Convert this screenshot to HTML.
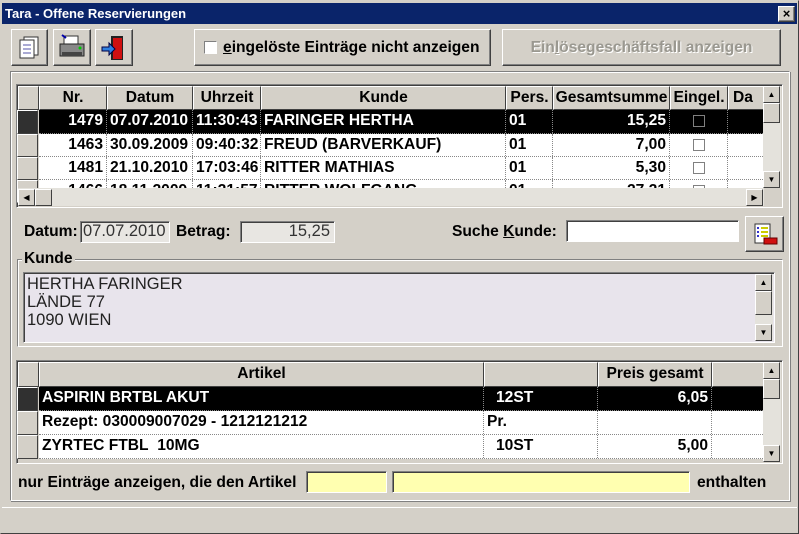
<!DOCTYPE html>
<html><head><meta charset="utf-8"><style>
*{margin:0;padding:0;box-sizing:border-box}
body{width:799px;height:534px;background:#d4d0c8;font-family:"Liberation Sans",Arial,sans-serif;font-size:15.6px;color:#000;position:relative;overflow:hidden}
.a{position:absolute}
.raised{border:1px solid;border-color:#fff #404040 #404040 #fff;box-shadow:inset -1px -1px 0 #808080}
.sunk{border:1px solid;border-color:#808080 #fff #fff #808080;box-shadow:inset 1px 1px 0 #404040}
.b{font-weight:bold}
.cell{position:absolute;top:0;height:100%;border-right:1px dotted #888;white-space:nowrap;overflow:hidden;line-height:22px;padding:0 3px;font-weight:bold;font-size:15.6px}
.row{position:absolute;left:0;background:#fff;border-bottom:1px dotted #888}
.sel{background:#000;color:#fff}
.hdr{position:absolute;top:0;height:100%;border:1px solid;border-color:#fff #404040 #404040 #fff;background:#d4d0c8;text-align:center;line-height:22px;font-weight:bold;font-size:15.6px;white-space:nowrap;overflow:hidden}
.rh{position:absolute;left:0;width:21px;border:1px solid;border-color:#fff #404040 #404040 #fff;background:#d4d0c8}
.sb{background:#e4e2dc}
.arr{position:absolute;width:17px;height:17px;background:#d4d0c8;border:1px solid;border-color:#fff #404040 #404040 #fff;font-size:8px;text-align:center;line-height:15px}
.r{text-align:right}
.cb{display:inline-block;width:12px;height:12px;border:1px solid #808080;background:#fff;vertical-align:middle}
</style></head><body>
<div class="a" style="left:0;top:0;width:799px;height:534px;border:1px solid;border-color:#d4d0c8 #404040 #404040 #d4d0c8"></div>
<div class="a" style="left:2px;top:3px;width:795px;height:21px;background:#0a246a;color:#fff;font-weight:bold;font-size:13px;line-height:21px;padding-left:3px">Tara - Offene Reservierungen</div>
<div class="a raised" style="left:778px;top:6px;width:17px;height:16px;background:#d4d0c8;text-align:center;font-weight:bold;line-height:13px;font-size:13px">×</div>
<div class="a raised" style="left:11px;top:29px;width:37px;height:37px;background:#d4d0c8">
<svg width="35" height="35"><rect x="12" y="7" width="14" height="18" fill="#fff" stroke="#333"/><rect x="8" y="10" width="14" height="18" fill="#fff" stroke="#333"/><line x1="11" y1="15" x2="19" y2="15" stroke="#55a"/><line x1="11" y1="19" x2="19" y2="19" stroke="#55a"/><line x1="11" y1="23" x2="19" y2="23" stroke="#55a"/></svg></div>
<div class="a raised" style="left:53px;top:29px;width:38px;height:37px;background:#d4d0c8">
<svg width="36" height="35"><rect x="10" y="6" width="14" height="10" fill="#fff" stroke="#333"/><rect x="6" y="14" width="24" height="12" fill="#888" stroke="#222"/><rect x="8" y="22" width="20" height="4" fill="#444"/><circle cx="26" cy="18" r="1.5" fill="#0c0"/><path d="M8 5 l4 3" stroke="#00a" stroke-width="2"/></svg></div>
<div class="a raised" style="left:95px;top:29px;width:38px;height:37px;background:#d4d0c8">
<svg width="36" height="35"><rect x="15" y="6" width="12" height="24" fill="#222"/><rect x="17" y="8" width="9" height="21" fill="#d01010"/><path d="M6 17 h7 v-4 l6 6 -6 6 v-4 h-7z" fill="#3080e0" stroke="#004"/></svg></div>
<div class="a raised" style="left:194px;top:29px;width:297px;height:37px;background:#d4d0c8;line-height:35px;padding-left:9px;font-weight:bold"><span class="cb" style="width:13px;height:13px;border-color:#808080 #fff #fff #808080;margin-right:6px"></span><u>e</u>ingelöste Einträge nicht anzeigen</div>
<div class="a raised" style="left:502px;top:29px;width:279px;height:37px;background:#d4d0c8;line-height:35px;text-align:center;font-weight:bold;color:#9a9890;text-shadow:1px 1px 0 #fff">Ein<u>l</u>ösegeschäftsfall anzeigen</div>
<div class="a" style="left:10px;top:71px;width:780px;height:430px;border:1px solid;border-color:#808080 #fff #fff #808080;box-shadow:inset 1px 1px 0 #fff, 1px 1px 0 #808080"></div>
<div class="a sunk" style="left:16px;top:84px;width:767px;height:124px;background:#d4d0c8;overflow:hidden">
 <div class="a" style="left:1px;top:1px;width:746px;height:24px">
  <div class="hdr" style="left:0;width:21px"></div>
  <div class="hdr" style="left:21px;width:68px">Nr.</div>
  <div class="hdr" style="left:89px;width:86px">Datum</div>
  <div class="hdr" style="left:175px;width:68px">Uhrzeit</div>
  <div class="hdr" style="left:243px;width:245px">Kunde</div>
  <div class="hdr" style="left:488px;width:47px">Pers.</div>
  <div class="hdr" style="left:535px;width:117px">Gesamtsumme</div>
  <div class="hdr" style="left:652px;width:58px">Eingel.</div>
  <div class="hdr" style="left:710px;width:40px;text-align:left;padding-left:4px">Da</div>
 </div>
 <div class="rh" style="top:25px;height:24px;background:#303030"></div>
 <div class="rh" style="top:49px;height:23px"></div>
 <div class="rh" style="top:72px;height:23px"></div>
 <div class="rh" style="top:95px;height:23px"></div>
 <div class="row sel" style="left:22px;top:25px;width:724px;height:24px">
  <div class="cell r" style="left:0;width:68px">1479</div><div class="cell" style="left:68px;width:86px">07.07.2010</div><div class="cell" style="left:154px;width:68px">11:30:43</div><div class="cell" style="left:222px;width:245px">FARINGER HERTHA</div><div class="cell" style="left:467px;width:47px">01</div><div class="cell r" style="left:514px;width:117px">15,25</div><div class="cell" style="left:631px;width:58px;text-align:center"><span class="cb" style="background:#000"></span></div></div>
 <div class="row" style="left:22px;top:49px;width:724px;height:23px">
  <div class="cell r" style="left:0;width:68px">1463</div><div class="cell" style="left:68px;width:86px">30.09.2009</div><div class="cell" style="left:154px;width:68px">09:40:32</div><div class="cell" style="left:222px;width:245px">FREUD (BARVERKAUF)</div><div class="cell" style="left:467px;width:47px">01</div><div class="cell r" style="left:514px;width:117px">7,00</div><div class="cell" style="left:631px;width:58px;text-align:center"><span class="cb"></span></div></div>
 <div class="row" style="left:22px;top:72px;width:724px;height:23px">
  <div class="cell r" style="left:0;width:68px">1481</div><div class="cell" style="left:68px;width:86px">21.10.2010</div><div class="cell" style="left:154px;width:68px">17:03:46</div><div class="cell" style="left:222px;width:245px">RITTER MATHIAS</div><div class="cell" style="left:467px;width:47px">01</div><div class="cell r" style="left:514px;width:117px">5,30</div><div class="cell" style="left:631px;width:58px;text-align:center"><span class="cb"></span></div></div>
 <div class="row" style="left:22px;top:95px;width:724px;height:23px">
  <div class="cell r" style="left:0;width:68px">1466</div><div class="cell" style="left:68px;width:86px">18.11.2009</div><div class="cell" style="left:154px;width:68px">11:21:57</div><div class="cell" style="left:222px;width:245px">RITTER WOLFGANG</div><div class="cell" style="left:467px;width:47px">01</div><div class="cell r" style="left:514px;width:117px">27,21</div><div class="cell" style="left:631px;width:58px;text-align:center"><span class="cb"></span></div></div>
 <div class="a sb" style="left:746px;top:1px;width:18px;height:102px"></div>
 <div class="arr" style="left:746px;top:1px">▲</div>
 <div class="arr" style="left:746px;top:18px;height:20px"></div>
 <div class="arr" style="left:746px;top:86px">▼</div>
 <div class="a sb" style="left:1px;top:103px;width:746px;height:18px"></div>
 <div class="arr" style="left:1px;top:104px">◀</div>
 <div class="arr" style="left:18px;top:104px"></div>
 <div class="arr" style="left:729px;top:104px">▶</div>
</div>
<div class="a b" style="left:24px;top:223px">Datum:</div>
<div class="a sunk" style="left:80px;top:221px;width:90px;height:22px;background:#e8e6e2;line-height:19px;padding-left:2px;font-size:16.5px;color:#333">07.07.2010</div>
<div class="a b" style="left:176px;top:223px">Betrag:</div>
<div class="a sunk" style="left:240px;top:221px;width:95px;height:22px;background:#e8e6e2;line-height:19px;padding-right:4px;text-align:right;font-size:16.5px;color:#333">15,25</div>
<div class="a b" style="left:452px;top:223px">Suche <u>K</u>unde:</div>
<div class="a sunk" style="left:566px;top:220px;width:173px;height:22px;background:#fff"></div>
<div class="a raised" style="left:745px;top:216px;width:39px;height:36px;background:#d4d0c8">
<svg width="37" height="34"><rect x="9" y="7" width="15" height="19" fill="#fff" stroke="#333"/><g fill="#33c"><rect x="11" y="10" width="2" height="2"/><rect x="11" y="14" width="2" height="2"/><rect x="11" y="18" width="2" height="2"/></g><g stroke="#cc0" stroke-width="2"><line x1="15" y1="11" x2="22" y2="11"/><line x1="15" y1="15" x2="22" y2="15"/><line x1="15" y1="19" x2="22" y2="19"/></g><rect x="18" y="21" width="13" height="6" fill="#d01010" stroke="#600"/></svg></div>
<div class="a" style="left:17px;top:259px;width:766px;height:88px;border:1px solid;border-color:#808080 #fff #fff #808080;box-shadow:inset 1px 1px 0 #fff"></div>
<div class="a b" style="left:22px;top:250px;background:#d4d0c8;padding:0 2px">Kunde</div>
<div class="a sunk" style="left:23px;top:272px;width:752px;height:71px;background:#e8e4ec;padding:2px 3px;font-size:16.5px;line-height:18px;color:#222">HERTHA FARINGER<br>LÄNDE 77<br>1090 WIEN</div>
<div class="a sb" style="left:755px;top:274px;width:18px;height:67px"></div>
<div class="arr" style="left:755px;top:274px">▲</div>
<div class="arr" style="left:755px;top:291px;height:24px"></div>
<div class="arr" style="left:755px;top:324px">▼</div>
<div class="a sunk" style="left:16px;top:360px;width:767px;height:104px;background:#d4d0c8;overflow:hidden">
 <div class="a" style="left:1px;top:1px;width:746px;height:25px">
  <div class="hdr" style="left:0;width:21px"></div>
  <div class="hdr" style="left:21px;width:445px">Artikel</div>
  <div class="hdr" style="left:466px;width:114px"></div>
  <div class="hdr" style="left:580px;width:114px">Preis gesamt</div>
  <div class="hdr" style="left:694px;width:56px"></div>
 </div>
 <div class="rh" style="top:26px;height:24px;background:#303030"></div>
 <div class="rh" style="top:50px;height:24px"></div>
 <div class="rh" style="top:74px;height:24px"></div>
 <div class="row sel" style="left:22px;top:26px;width:724px;height:24px">
  <div class="cell" style="left:0;width:445px">ASPIRIN BRTBL AKUT</div><div class="cell" style="left:445px;width:114px;padding-left:12px">12ST</div><div class="cell r" style="left:559px;width:114px">6,05</div></div>
 <div class="row" style="left:22px;top:50px;width:724px;height:24px">
  <div class="cell" style="left:0;width:445px">Rezept: 030009007029 - 1212121212</div><div class="cell" style="left:445px;width:114px">Pr.</div><div class="cell r" style="left:559px;width:114px"></div></div>
 <div class="row" style="left:22px;top:74px;width:724px;height:24px">
  <div class="cell" style="left:0;width:445px">ZYRTEC FTBL&nbsp; 10MG</div><div class="cell" style="left:445px;width:114px;padding-left:12px">10ST</div><div class="cell r" style="left:559px;width:114px">5,00</div></div>
 <div class="a sb" style="left:746px;top:1px;width:18px;height:100px"></div>
 <div class="arr" style="left:746px;top:1px">▲</div>
 <div class="arr" style="left:746px;top:18px;height:20px"></div>
 <div class="arr" style="left:746px;top:84px">▼</div>
</div>
<div class="a b" style="left:18px;top:474px">nur Einträge anzeigen, die den Artikel</div>
<div class="a sunk" style="left:306px;top:471px;width:81px;height:22px;background:#ffffb0"></div>
<div class="a sunk" style="left:392px;top:471px;width:298px;height:22px;background:#ffffb0"></div>
<div class="a b" style="left:697px;top:474px">enthalten</div>
<div class="a" style="left:2px;top:507px;width:795px;height:1px;background:#fff"></div>
</body></html>
